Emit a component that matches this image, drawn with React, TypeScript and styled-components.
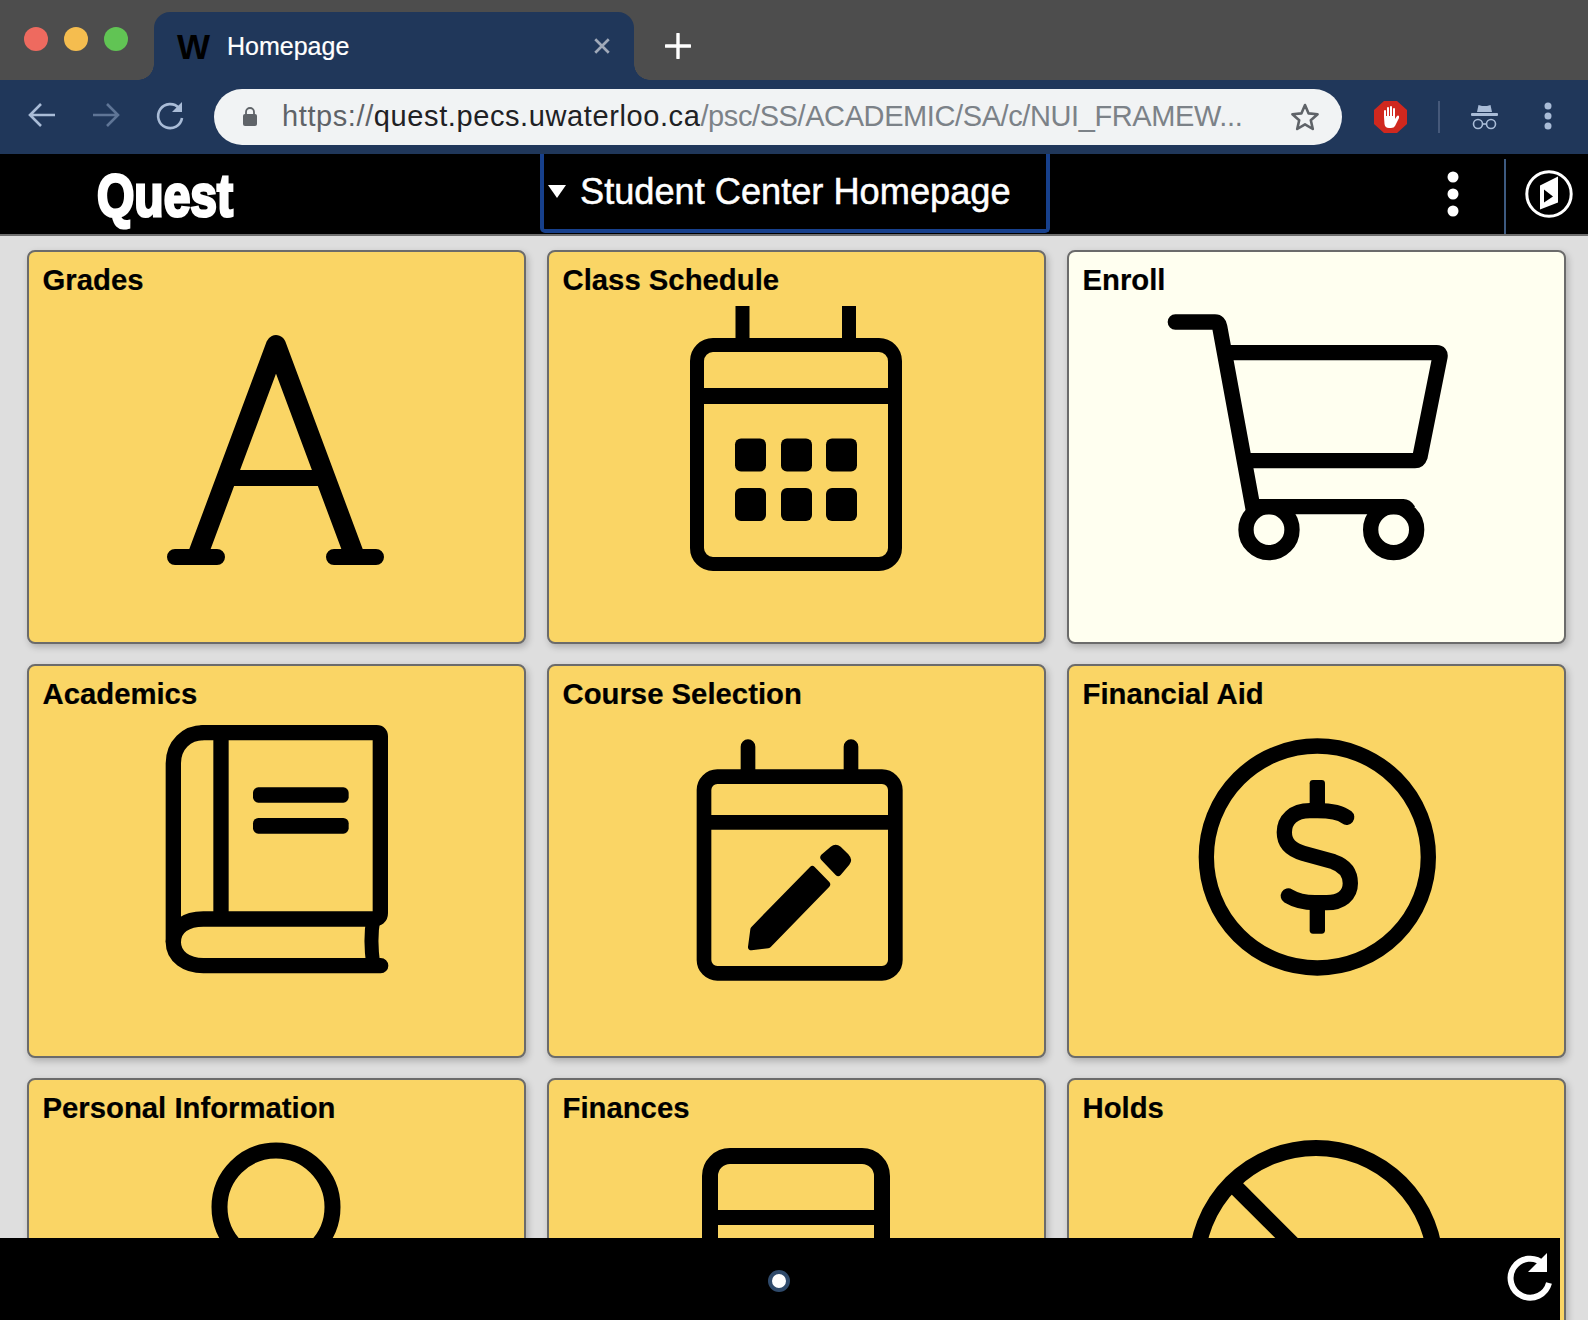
import React from 'react';
import styled, { createGlobalStyle } from 'styled-components';

const GlobalStyle = createGlobalStyle`
  html, body {
    margin: 0;
    padding: 0;
    background: #dedede;
    font-family: "Liberation Sans", Arial, sans-serif;
  }
`;

const NAVY = '#20375a';

const Screen = styled.div`
  position: relative;
  width: 1588px;
  height: 1320px;
  overflow: hidden;
  background: #dedede;
`;

// browser chrome
const TabStrip = styled.div`
  display: flex;
  align-items: flex-end;
  height: 80px;
  padding-left: 24px;
  background: #4d4d4d;
`;

const Lights = styled.div`
  display: flex;
  gap: 16px;
  align-self: flex-start;
  margin-top: 27px;
`;

const Light = styled.span<{ $color: string }>`
  width: 24px;
  height: 24px;
  border-radius: 50%;
  background: ${(p) => p.$color};
`;

const Tab = styled.div`
  position: relative;
  display: flex;
  align-items: center;
  width: 480px;
  height: 68px;
  margin-left: 26px;
  padding-left: 23px;
  box-sizing: border-box;
  background: ${NAVY};
  border-radius: 16px 16px 0 0;
  &::before,
  &::after {
    content: '';
    position: absolute;
    bottom: 0;
    width: 16px;
    height: 16px;
  }
  &::before {
    left: -16px;
    background: radial-gradient(circle at 0 0, transparent 15.5px, ${NAVY} 16px);
  }
  &::after {
    right: -16px;
    background: radial-gradient(circle at 100% 0, transparent 15.5px, ${NAVY} 16px);
  }
`;

const Favicon = styled.span`
  width: 50px;
  font-weight: 700;
  font-size: 35px;
  line-height: 1;
  color: #000;
`;

const TabTitle = styled.span`
  font-size: 25px;
  color: #fff;
  -webkit-text-stroke: 0.2px #fff;
`;

const TabClose = styled.svg`
  margin-left: auto;
  margin-right: 23px;
`;

const NewTab = styled.svg`
  align-self: center;
  margin-left: 31px;
  margin-top: 12px;
`;

const Toolbar = styled.div`
  display: flex;
  align-items: center;
  height: 74px;
  padding: 0 0 1px 26px;
  box-sizing: border-box;
  background: ${NAVY};
`;

const NavIcon = styled.svg`
  display: block;
  flex: none;
  margin-top: -3px;
  & + & {
    margin-left: 32px;
  }
`;

const Omnibox = styled.div`
  display: flex;
  align-items: center;
  flex: none;
  width: 1128px;
  height: 56px;
  margin-left: 28px;
  padding: 0 22px 0 28px;
  box-sizing: border-box;
  border-radius: 28px;
  background: #f1f3f4;
`;

const Url = styled.span`
  margin-left: 24px;
  font-size: 29px;
  letter-spacing: -0.4px;
  white-space: nowrap;
  color: #7c8288;
`;

const UrlScheme = styled.span`
  letter-spacing: 0.6px;
  color: #5f6368;
`;

const UrlHost = styled.span`
  letter-spacing: 0.6px;
  color: #202124;
`;

const Star = styled.svg`
  margin-left: auto;
`;

const StopSign = styled.svg`
  flex: none;
  margin-left: 32px;
`;

const ToolDivider = styled.span`
  flex: none;
  width: 2px;
  height: 32px;
  margin-left: 31px;
  background: #46597a;
`;

const Incognito = styled.svg`
  flex: none;
  margin-left: 31px;
`;

const MenuDots = styled.svg`
  flex: none;
  margin-left: 46px;
  margin-top: -2px;
`;

// quest header
const QuestHeader = styled.header`
  display: flex;
  height: 80px;
  padding-left: 97px;
  background: #000;
  border-bottom: 2px solid #6f6f6f;
`;

const Logo = styled.div`
  flex: none;
  width: 443px;
  font-weight: 700;
  font-size: 60px;
  line-height: 84px;
  color: #fff;
  -webkit-text-stroke: 3px #fff;
  transform: scaleX(0.8);
  transform-origin: left center;
`;

const PageTitle = styled.div`
  display: flex;
  align-items: center;
  flex: none;
  width: 510px;
  height: 79px;
  padding: 0 0 0 4px;
  box-sizing: border-box;
  border: 4px solid #17408c;
  border-top: 0;
  border-radius: 0 0 5px 5px;
  color: #fff;
  font-size: 36.2px;
  -webkit-text-stroke: 0.5px #fff;
`;

const Caret = styled.span`
  width: 0;
  height: 0;
  margin-right: 14px;
  border-left: 9px solid transparent;
  border-right: 9px solid transparent;
  border-top: 13px solid #fff;
`;

const HeaderDots = styled.svg`
  flex: none;
  align-self: center;
  margin-left: 397px;
`;

const HeaderDivider = styled.span`
  flex: none;
  align-self: flex-end;
  width: 2px;
  height: 75px;
  margin-left: 45px;
  background: #3d5a80;
`;

const Compass = styled.svg`
  flex: none;
  align-self: center;
  margin-left: 19px;
`;

// tile grid
const TileGrid = styled.main`
  display: grid;
  grid-template-columns: repeat(3, 499px);
  grid-auto-rows: 394px;
  gap: 20px 21px;
  padding: 14px 0 0 26.5px;
`;

const Tile = styled.section<{ $active?: boolean }>`
  box-sizing: border-box;
  border: 2px solid #6b6b6b;
  border-radius: 8px;
  background: ${(p) => (p.$active ? '#fffff0' : '#fad565')};
  box-shadow: 2px 3px 7px rgba(0, 0, 0, 0.22);
`;

const TileTitle = styled.h2`
  margin: 0;
  padding: 10px 14px 2px;
  font-size: 29.3px;
  font-weight: 700;
  line-height: 36px;
  color: #000;
  -webkit-text-stroke: 0.2px #000;
`;

const TileIcon = styled.svg`
  display: block;
  margin: 0 auto;
`;

const Footer = styled.footer`
  position: absolute;
  left: 0;
  bottom: 0;
  display: flex;
  align-items: center;
  justify-content: center;
  width: 1560px;
  height: 82px;
  background: #000;
`;

const PageDot = styled.span`
  width: 14px;
  height: 14px;
  margin-right: 2px;
  margin-top: 4px;
  border: 4px solid #2f4a6b;
  border-radius: 50%;
  background: #fff;
`;

const FooterRefresh = styled.svg`
  position: absolute;
  right: 6px;
  top: 13px;
`;

const ZOOM = 'scale(0.33333)';

const GradesIcon = () => (
  <g fill="none" stroke="#000" strokeLinejoin="round">
    <path d="M71 257 L150 45 L229 257" strokeWidth="20" />
    <path d="M98 178 H202" strokeWidth="16" />
    <path d="M49 257 H91 M208 257 H250" strokeWidth="16" strokeLinecap="round" />
  </g>
);

const ScheduleIcon = () => (
  <g>
    <rect x="51" y="45" width="198" height="219" rx="16" fill="none" stroke="#000" strokeWidth="14" />
    <path d="M96.500 6 V40 M203 6 V40" stroke="#000" strokeWidth="14" />
    <path d="M50 96 H250" stroke="#000" strokeWidth="16" />
    {[89, 135, 180].map((x) =>
      [138.5, 188].map((y) => <rect key={`${x}-${y}`} x={x} y={y} width="31" height="33" rx="6" fill="#000" />),
    )}
  </g>
);

const CartIcon = () => (
  <g transform={`translate(-16 0) ${ZOOM}`} fill="none" stroke="#000" strokeWidth="46" strokeLinejoin="round">
    <path d="M76 66 H195 Q207 66 209 80 L310 630" strokeLinecap="round" />
    <path d="M235 158 H860 Q872 158 870 170 L810 470 Q806 482 795 482 H290" />
    <path d="M310 620 H760 Q768 620 776 632" />
    <circle cx="357" cy="689" r="69" />
    <circle cx="731" cy="689" r="69" />
  </g>
);

const AcademicsIcon = () => (
  <g transform={`translate(14 -14) ${ZOOM}`} fill="none" stroke="#000" strokeWidth="46" strokeLinejoin="round">
    <path d="M190 98 H710 Q721 98 721 109 V640 Q721 657 700 657 H190 C140 657 100 680 100 727 C100 770 140 797 190 797 H722" strokeLinecap="round" />
    <path d="M100 727 V190 C100 135 140 98 190 98" />
    <path d="M243 98 V657" />
    <path d="M700 657 C692 700 692 740 700 797" strokeWidth="42" />
    <rect x="339" y="262" width="287" height="46" rx="16" fill="#000" stroke="none" />
    <rect x="339" y="354" width="287" height="47" rx="16" fill="#000" stroke="none" />
  </g>
);

const SelectionIcon = () => (
  <g transform={`translate(24 6) ${ZOOM}`}>
    <rect x="102" y="170" width="574" height="590" rx="40" fill="none" stroke="#000" strokeWidth="44" />
    <path d="M234 80 V170 M543 80 V170" stroke="#000" strokeWidth="44" strokeLinecap="round" />
    <path d="M90 307 H690" stroke="#000" strokeWidth="44" />
    <path
      d="M420 441 Q427 434 434 441 L478 486 Q484 493 478 500 L303 680 Q300 684 295 685 L245 691 Q233 691 234 680 L241 628 Q241 624 245 620 Z"
      fill="#000"
    />
    <path
      d="M454 404 L482 380 Q497 368 512 380 L535 403 Q550 420 538 434 L512 465 Q505 473 497 465 L454 420 Q447 412 454 404 Z"
      fill="#000"
    />
  </g>
);

const AidIcon = () => (
  <g transform={`translate(14 6) ${ZOOM}`}>
    <circle cx="412" cy="411" r="333" fill="none" stroke="#000" strokeWidth="46" />
    <path
      d="M500 292 C480 276 450 272 412 272 H390 C340 272 313 300 313 337 C313 372 335 390 370 400 L460 425 C495 437 511 460 511 490 C511 525 485 548 440 548 H405 C370 548 345 540 325 528"
      fill="none"
      stroke="#000"
      strokeWidth="46"
      strokeLinecap="round"
    />
    <rect x="389" y="180" width="46" height="90" rx="10" fill="#000" />
    <rect x="389" y="550" width="46" height="91" rx="10" fill="#000" />
  </g>
);

const PersonIcon = () => <circle cx="150" cy="79" r="56.500" fill="none" stroke="#000" strokeWidth="16" />;

const FinancesIcon = () => (
  <g fill="none" stroke="#000">
    <rect x="64" y="28" width="172" height="220" rx="20" strokeWidth="16" />
    <path d="M60 89.500 H240" strokeWidth="15" />
  </g>
);

const HoldsIcon = () => (
  <g fill="none" stroke="#000" strokeWidth="16">
    <circle cx="150" cy="139.500" r="119.500" />
    <path d="M65.500 55 L234.500 224" />
  </g>
);

const tiles = [
  { title: 'Grades', icon: <GradesIcon /> },
  { title: 'Class Schedule', icon: <ScheduleIcon /> },
  { title: 'Enroll', icon: <CartIcon />, active: true },
  { title: 'Academics', icon: <AcademicsIcon /> },
  { title: 'Course Selection', icon: <SelectionIcon /> },
  { title: 'Financial Aid', icon: <AidIcon /> },
  { title: 'Personal Information', icon: <PersonIcon /> },
  { title: 'Finances', icon: <FinancesIcon /> },
  { title: 'Holds', icon: <HoldsIcon /> },
];

const App: React.FC = () => (
  <Screen>
    <GlobalStyle />
    <TabStrip>
      <Lights>
        <Light $color="#ee6a5f" />
        <Light $color="#f5bd4f" />
        <Light $color="#61c454" />
      </Lights>
      <Tab>
        <Favicon>W</Favicon>
        <TabTitle>Homepage</TabTitle>
        <TabClose width="18" height="18" viewBox="0 0 16 16">
          <path d="M2 2 L14 14 M14 2 L2 14" stroke="#a0a9b8" strokeWidth="2.4" />
        </TabClose>
      </Tab>
      <NewTab width="26" height="26" viewBox="0 0 26 26">
        <path d="M13 1 V25 M1 13 H25" stroke="#fff" strokeWidth="3.4" strokeLinecap="round" />
      </NewTab>
    </TabStrip>

    <Toolbar>
      <NavIcon width="32" height="32" viewBox="0 0 32 32">
        <path d="M4 16 H29 M15 5 L4 16 L15 27" fill="none" stroke="#a9bcd7" strokeWidth="2.6" />
      </NavIcon>
      <NavIcon width="32" height="32" viewBox="0 0 32 32">
        <path d="M3 16 H28 M17 5 L28 16 L17 27" fill="none" stroke="#5f7596" strokeWidth="2.6" />
      </NavIcon>
      <NavIcon width="32" height="32" viewBox="0 0 32 32">
        <path d="M25 9 A12 12 0 1 0 28 19" fill="none" stroke="#a9bcd7" strokeWidth="2.6" />
        <path d="M28 3 V13 H18 Z" fill="#a9bcd7" />
      </NavIcon>
      <Omnibox>
        <svg width="16" height="20" viewBox="0 0 16 20">
          <rect x="1" y="7" width="14" height="12" rx="2" fill="#5f6368" />
          <path d="M4 8 V5 A4 4 0 0 1 12 5 V8" fill="none" stroke="#5f6368" strokeWidth="1.8" />
        </svg>
        <Url>
          <UrlScheme>https://</UrlScheme>
          <UrlHost>quest.pecs.uwaterloo.ca</UrlHost>/psc/SS/ACADEMIC/SA/c/NUI_FRAMEW...
        </Url>
        <Star width="30" height="30" viewBox="0 0 30 30">
          <path
            d="M15 3 L18.600 11.400 L27.600 12.200 L20.800 18.200 L22.800 27 L15 22.300 L7.200 27 L9.200 18.200 L2.400 12.200 L11.400 11.400 Z"
            fill="none"
            stroke="#5f6368"
            strokeWidth="2.6"
            strokeLinejoin="round"
          />
        </Star>
      </Omnibox>
      <StopSign width="33" height="32" viewBox="0 0 33 32">
        <path d="M10 0 H23 L33 9 V23 L23 32 H10 L0 23 V9 Z" fill="#d0281e" />
        <path
          d="M10 16 V10 Q10 9 11 9 Q12 9 12 10 V15 H13 V7 Q13 6 14 6 Q15 6 15 7 V15 H16 V6 Q16 5 17 5 Q18 5 18 6 V15 H19 V8 Q19 7 20 7 Q21 7 21 8 V18 L23 15 Q24 14 25 15 Q25 16 25 17 L21 25 Q20 27 17 27 H15 Q11 27 10.500 23 Z"
          fill="#fff"
        />
      </StopSign>
      <ToolDivider />
      <Incognito width="27" height="26" viewBox="0 0 27 26">
        <path d="M6 8 L7.500 1 L11 2 H16 L19.500 1 L21 8 Z" fill="#a9bcd7" />
        <rect x="0" y="9" width="27" height="3" rx="1" fill="#a9bcd7" />
        <circle cx="7" cy="20" r="4.500" fill="none" stroke="#a9bcd7" strokeWidth="1.600" />
        <circle cx="20" cy="20" r="4.500" fill="none" stroke="#a9bcd7" strokeWidth="1.600" />
        <path d="M11.500 20 H15.500" stroke="#a9bcd7" strokeWidth="1.600" />
      </Incognito>
      <MenuDots width="8" height="28" viewBox="0 0 8 28">
        <circle cx="4" cy="4" r="3.500" fill="#a9bcd7" />
        <circle cx="4" cy="14" r="3.500" fill="#a9bcd7" />
        <circle cx="4" cy="24" r="3.500" fill="#a9bcd7" />
      </MenuDots>
    </Toolbar>

    <QuestHeader>
      <Logo>Quest</Logo>
      <PageTitle>
        <Caret />
        Student Center Homepage
      </PageTitle>
      <HeaderDots width="12" height="46" viewBox="0 0 12 46">
        <circle cx="6" cy="6" r="5.500" fill="#fff" />
        <circle cx="6" cy="23" r="5.500" fill="#fff" />
        <circle cx="6" cy="40" r="5.500" fill="#fff" />
      </HeaderDots>
      <HeaderDivider />
      <Compass width="48" height="48" viewBox="0 0 48 48">
        <circle cx="24" cy="24" r="22.200" fill="none" stroke="#fff" strokeWidth="3" />
        <path d="M15 18 L33 9 V35 L15 42 Z M19 22 V35 L28 29 Z" fill="#fff" fillRule="evenodd" transform="translate(0 -2.500)" />
      </Compass>
    </QuestHeader>

    <TileGrid>
      {tiles.map((tile) => (
        <Tile key={tile.title} $active={tile.active}>
          <TileTitle>{tile.title}</TileTitle>
          <TileIcon width="300" height="340" viewBox="0 0 300 340">
            {tile.icon}
          </TileIcon>
        </Tile>
      ))}
    </TileGrid>

    <Footer>
      <PageDot />
      <FooterRefresh width="48" height="52" viewBox="0 0 48 52">
        <path d="M37.500 13 A19.500 19.500 0 1 0 43 32" fill="none" stroke="#fff" strokeWidth="6" />
        <path d="M41 2 V21 H22 Z" fill="#fff" />
      </FooterRefresh>
    </Footer>
  </Screen>
);

export default App;
